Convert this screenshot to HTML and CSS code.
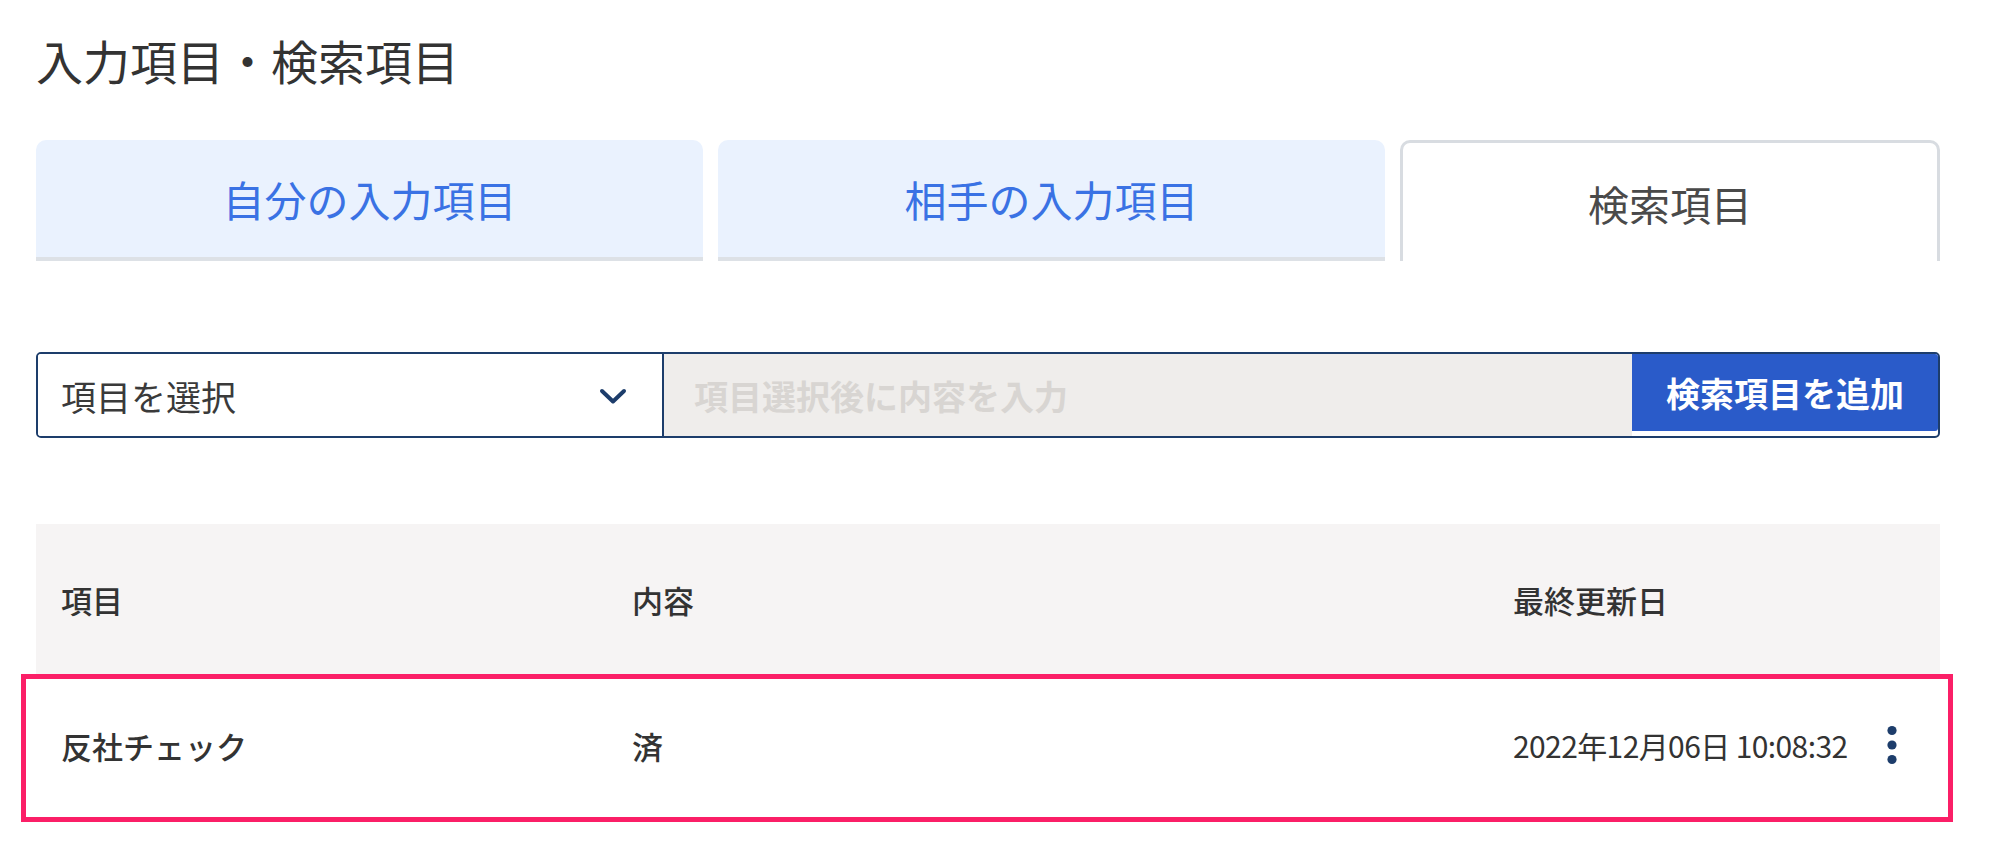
FILE: index.html
```html
<!DOCTYPE html>
<html lang="ja">
<head>
<meta charset="utf-8">
<title>入力項目・検索項目</title>
<link rel="stylesheet" href="styles.css">
</head>
<body>
<div class="page">
  <h1 class="title">入力項目・検索項目</h1>
  <div class="tabs">
    <div class="tab">自分の入力項目</div>
    <div class="tab">相手の入力項目</div>
    <div class="tab active">検索項目</div>
  </div>
  <div class="search">
    <div class="select">
      <span>項目を選択</span>
      <svg class="chev" viewBox="0 0 30 20" width="30" height="20"><path d="M4 5l11 10.5L26 5" fill="none" stroke="#1d3d6b" stroke-width="4" stroke-linecap="round" stroke-linejoin="round"/></svg>
    </div>
    <div class="input">項目選択後に内容を入力</div>
    <button class="add">検索項目を追加</button>
  </div>
  <div class="table">
    <div class="thead">
      <div>項目</div>
      <div>内容</div>
      <div>最終更新日</div>
    </div>
    <div class="row">
      <div>反社チェック</div>
      <div>済</div>
      <div class="datecell">
        <span class="date">2022年12月06日 10:08:32</span>
        <svg class="kebab" viewBox="0 0 12 40" width="12" height="40"><circle cx="6" cy="5.5" r="4.6" fill="#1d3d6b"/><circle cx="6" cy="20" r="4.6" fill="#1d3d6b"/><circle cx="6" cy="34.5" r="4.6" fill="#1d3d6b"/></svg>
      </div>
    </div>
  </div>
</div>
</body>
</html>
```

FILE: styles.css
```css
* { box-sizing: border-box; }
html, body { margin: 0; padding: 0; background: #fff; }
body {
  font-family: "Noto Sans CJK JP", "Noto Sans", sans-serif;
  color: #333;
}
.page {
  width: 1904px;
  margin-left: 36px;
}
.title {
  margin: 32px 0 0;
  font-size: 47px;
  line-height: 56px;
  font-weight: 400;
  color: #333;
}
.tabs {
  display: flex;
  gap: 15px;
  margin-top: 52px;
  height: 121px;
}
.tab {
  flex: 0 0 667px;
  display: flex;
  align-items: center;
  justify-content: center;
  background: #eaf2fe;
  color: #3a72e4;
  font-size: 42px;
  font-weight: 400;
  border-radius: 10px 10px 0 0;
  border-bottom: 4px solid #dde1e6;
}
.tab.active {
  flex: 1 1 auto;
  background: #fff;
  color: #4a4a4a;
  font-size: 41px;
  font-weight: 400;
  border: 3px solid #d8dce1;
  border-bottom: none;
  padding-top: 2px;
}
.search {
  display: flex;
  margin-top: 91px;
  height: 86px;
  border: 2px solid #1d3d6b;
  border-radius: 5px;
  overflow: hidden;
}
.select {
  flex: 0 0 626px;
  display: flex;
  align-items: center;
  justify-content: space-between;
  padding: 0 34px 0 23px;
  background: #fff;
  border-right: 2px solid #1d3d6b;
  font-size: 35px;
  color: #3a3a3a;
}
.chev { margin-top: 2px; }
.input {
  flex: 1 1 auto;
  display: flex;
  align-items: center;
  padding-left: 30px;
  background: #efedeb;
  color: #d8d5d2;
  font-size: 34px;
  font-weight: 700;
}
.add {
  flex: 0 0 306px;
  margin: 0 0 5px;
  border: none;
  border-radius: 0 0 3px 0;
  background: #2a5bc9;
  color: #fff;
  font-family: inherit;
  font-size: 34px;
  font-weight: 700;
}
.table { margin-top: 86px; }
.thead {
  display: grid;
  grid-template-columns: 571px 881px 1fr;
  align-items: center;
  height: 150px;
  padding-left: 25px;
  background: #f6f4f4;
  font-size: 31px;
  font-weight: 500;
  color: #333;
}
.row {
  display: grid;
  grid-template-columns: 571px 881px 1fr;
  align-items: center;
  height: 148px;
  margin: 0 -13px 0 -15px;
  padding-left: 35px;
  padding-bottom: 6px;
  border: 5px solid #fb1f67;
  font-size: 31px;
  font-weight: 500;
  color: #333;
}
.datecell {
  display: flex;
  align-items: center;
  gap: 38px;
}
.date {
  font-size: 30px;
  font-weight: 400;
  letter-spacing: -0.6px;
}
.kebab { margin-top: 0; }
```
